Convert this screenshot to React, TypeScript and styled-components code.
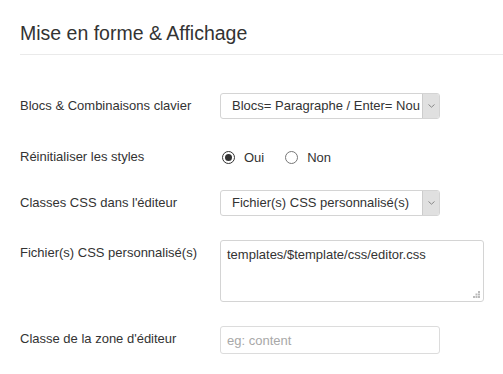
import React from "react";
import styled, { createGlobalStyle } from "styled-components";

const GlobalStyle = createGlobalStyle`
  html, body {
    margin: 0;
    padding: 0;
    background: #fff;
    font-family: "Liberation Sans", Arial, sans-serif;
    color: #333;
  }
`;

const Page = styled.div`
  padding: 20px 0 0 20px;
  width: 483px;
`;

const Title = styled.h2`
  margin: 0 0 38px;
  padding: 3px 0 10px;
  font-size: 19.5px;
  font-weight: normal;
  line-height: 21px;
  color: #333;
  border-bottom: 1px solid #eaeaea;
`;

const Row = styled.div<{ $space: number }>`
  display: flex;
  align-items: flex-start;
  margin-bottom: ${({ $space }) => $space}px;
`;

const Label = styled.div`
  width: 200px;
  flex: none;
  font-size: 13px;
  line-height: 26px;
  color: #333;
`;

const SelectBox = styled.div`
  width: 220px;
  height: 26px;
  box-sizing: border-box;
  border: 1px solid #d4d4d4;
  border-radius: 3px;
  display: flex;
  overflow: hidden;
  background: #fff;
`;

const SelectText = styled.div`
  flex: 1;
  padding-left: 11px;
  font-size: 13px;
  line-height: 24px;
  white-space: nowrap;
  overflow: hidden;
  color: #333;
`;

const Arrow = styled.div`
  width: 16px;
  flex: none;
  background: #e0e0e0;
  border-left: 1px solid #cccccc;
  display: flex;
  align-items: center;
  justify-content: center;
`;

const Radios = styled.div`
  display: flex;
  align-items: center;
  height: 26px;
  gap: 21px;
  padding-left: 2px;
`;

const RadioItem = styled.label`
  display: flex;
  align-items: center;
  gap: 9px;
  font-size: 13px;
  color: #333;
`;

const RadioDot = styled.span<{ $checked?: boolean }>`
  width: 13px;
  height: 13px;
  box-sizing: border-box;
  border-radius: 50%;
  border: 1px solid ${({ $checked }) => ($checked ? "#333" : "#777")};
  background: #fff;
  display: flex;
  align-items: center;
  justify-content: center;

  &::after {
    content: "";
    width: 7px;
    height: 7px;
    border-radius: 50%;
    background: ${({ $checked }) => ($checked ? "#333" : "transparent")};
  }
`;

const AreaWrap = styled.div`
  position: relative;
  width: 264px;
  height: 62px;
`;

const TextArea = styled.textarea`
  width: 100%;
  height: 100%;
  box-sizing: border-box;
  border: 1px solid #d4d4d4;
  border-radius: 3px;
  padding: 5px 6px;
  font-family: "Liberation Sans", Arial, sans-serif;
  font-size: 13px;
  line-height: 18px;
  color: #333;
  resize: none;
  outline: none;
`;

const Grip = styled.svg`
  position: absolute;
  right: 4px;
  bottom: 4px;
`;

const TextInput = styled.input`
  width: 220px;
  height: 28px;
  box-sizing: border-box;
  border: 1px solid #dcdcdc;
  border-radius: 3px;
  padding: 0 6px;
  font-family: "Liberation Sans", Arial, sans-serif;
  font-size: 13px;
  color: #333;
  outline: none;

  &::placeholder {
    color: #a8a8a8;
  }
`;

const Select = ({ value }: { value: string }) => (
  <SelectBox>
    <SelectText>{value}</SelectText>
    <Arrow>
      <svg width="7" height="4" viewBox="0 0 7 4">
        <path d="M0.5 0.5 L3.5 3.2 L6.5 0.5" fill="none" stroke="#888" strokeWidth="1" />
      </svg>
    </Arrow>
  </SelectBox>
);

export default function App() {
  return (
    <Page>
      <GlobalStyle />
      <Title>Mise en forme &amp; Affichage</Title>

      <Row $space={25}>
        <Label>Blocs &amp; Combinaisons clavier</Label>
        <Select value="Blocs= Paragraphe / Enter= Nou" />
      </Row>

      <Row $space={20}>
        <Label>Réinitialiser les styles</Label>
        <Radios>
          <RadioItem>
            <RadioDot $checked />
            Oui
          </RadioItem>
          <RadioItem>
            <RadioDot />
            Non
          </RadioItem>
        </Radios>
      </Row>

      <Row $space={24}>
        <Label>Classes CSS dans l'éditeur</Label>
        <Select value="Fichier(s) CSS personnalisé(s)" />
      </Row>

      <Row $space={24}>
        <Label>Fichier(s) CSS personnalisé(s)</Label>
        <AreaWrap>
          <TextArea defaultValue="templates/$template/css/editor.css" />
          <Grip width="7" height="7" viewBox="0 0 7 7">
            <rect x="5" y="0" width="2" height="2" fill="#bbb" />
            <rect x="5" y="2.5" width="2" height="2" fill="#bbb" />
            <rect x="2.5" y="2.5" width="2" height="2" fill="#bbb" />
            <rect x="5" y="5" width="2" height="2" fill="#bbb" />
            <rect x="2.5" y="5" width="2" height="2" fill="#bbb" />
            <rect x="0" y="5" width="2" height="2" fill="#bbb" />
          </Grip>
        </AreaWrap>
      </Row>

      <Row $space={20}>
        <Label>Classe de la zone d'éditeur</Label>
        <TextInput placeholder="eg: content" />
      </Row>
    </Page>
  );
}
